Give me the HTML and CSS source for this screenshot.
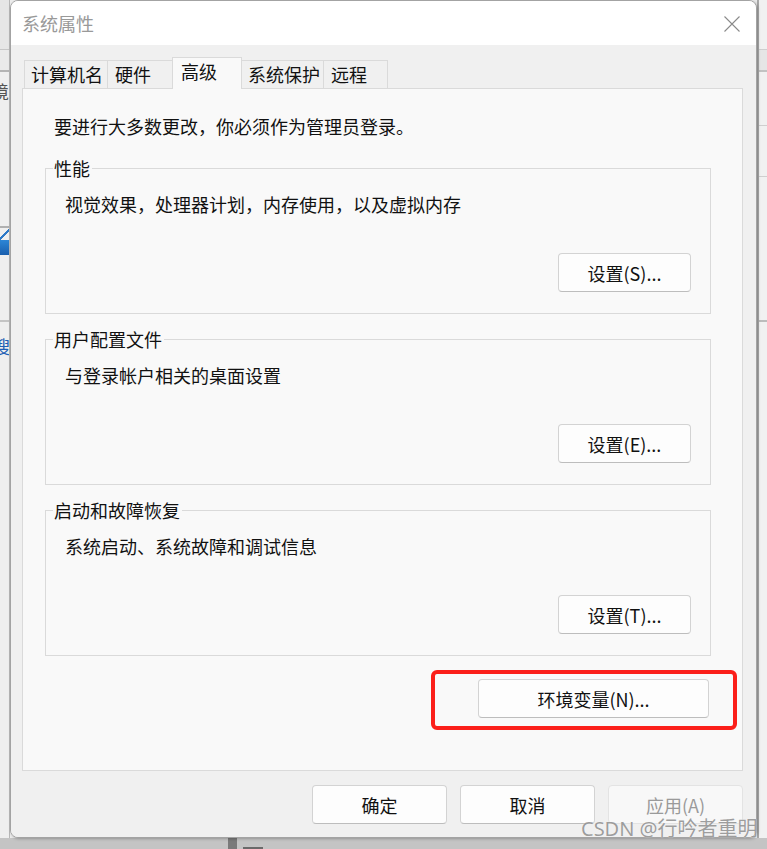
FILE: index.html
```html
<!DOCTYPE html>
<html lang="zh-CN">
<head>
<meta charset="utf-8">
<title>系统属性</title>
<link rel="stylesheet" href="styles.css">
</head>
<body>
<div class="screen">
  <div class="bg-left">
    <div class="bl-top"></div>
    <div class="bl-band"></div>
    <div class="bl-text">境</div>
    <div class="bl-icon"><div class="bl-icon-line"></div><div class="bl-icon-box"></div></div>
    <div class="bl-sep"></div>
    <div class="bl-link">搜</div>
  </div>

  <div class="dialog">
    <div class="titlebar">
      <span class="title">系统属性</span>
      <svg class="close" width="16" height="16" viewBox="0 0 16 16" aria-hidden="true">
        <path d="M0.5 0.5 L15.5 15.5 M15.5 0.5 L0.5 15.5" stroke="#8a8a8a" stroke-width="1.1" fill="none"/>
      </svg>
    </div>
    <div class="body">
      <div class="tabs">
        <div class="tab t1">计算机名</div>
        <div class="tab t2">硬件</div>
        <div class="tab t3 active">高级</div>
        <div class="tab t4">系统保护</div>
        <div class="tab t5">远程</div>
      </div>
      <div class="panel">
        <p class="intro">要进行大多数更改，你必须作为管理员登录。</p>

        <div class="group">
          <span class="legend">性能</span>
          <p class="desc">视觉效果，处理器计划，内存使用，以及虚拟内存</p>
          <div class="row"><button class="btn set">设置(S)...</button></div>
        </div>

        <div class="group">
          <span class="legend">用户配置文件</span>
          <p class="desc">与登录帐户相关的桌面设置</p>
          <div class="row"><button class="btn set">设置(E)...</button></div>
        </div>

        <div class="group">
          <span class="legend">启动和故障恢复</span>
          <p class="desc">系统启动、系统故障和调试信息</p>
          <div class="row"><button class="btn set">设置(T)...</button></div>
        </div>

        <div class="env-row"><button class="btn env">环境变量(N)...</button></div>
        <div class="highlight"></div>
      </div>
      <div class="footer">
        <button class="btn foot">确定</button>
        <button class="btn foot">取消</button>
        <button class="btn foot disabled">应用(A)</button>
      </div>
    </div>
  </div>

  <div class="bg-right">
    <div class="br-a"></div>
    <div class="br-b"></div>
    <div class="br-c"></div>
    <div class="br-d"></div>
    <div class="br-e"></div>
  </div>

  <div class="bg-bottom">
    <div class="bb-bar"></div>
    <div class="bb-tab"></div>
  </div>

  <div class="watermark">CSDN @行吟者重明</div>
</div>
</body>
</html>
```

FILE: styles.css
```css
* { box-sizing: border-box; }

html, body {
  margin: 0;
  padding: 0;
}

body {
  width: 767px;
  height: 849px;
  overflow: hidden;
  background: #ececec;
  font-family: "Noto Sans CJK SC", "Noto Sans", sans-serif;
  color: #111;
}

.screen {
  position: relative;
  display: grid;
  grid-template-columns: 10px 747px 10px;
  grid-template-rows: 838px 11px;
  width: 767px;
  height: 849px;
}

/* ---------- background fragments ---------- */
.bg-left {
  overflow: hidden;
  background: #efefef;
  border-right: 1px solid #b8b8b8;
}
.bl-top {
  height: 50px;
  background: #e6e6e6;
  border-bottom: 1px solid #c6c6c6;
}
.bl-band {
  height: 22px;
  background: #eaeaea;
  border-bottom: 2px solid #b4b4b4;
}
.bl-text {
  margin-top: 9px;
  margin-left: -9px;
  font-size: 18px;
  line-height: 20px;
  color: #555;
}
.bl-icon {
  margin-top: 125px;
  height: 30px;
}
.bl-icon-line {
  height: 14px;
  background: linear-gradient(135deg, transparent 0 45%, #2b78c8 45% 60%, transparent 60%);
  border-top: 2px solid #b0b0b0;
}
.bl-icon-box {
  height: 15px;
  background: linear-gradient(#2d86d6, #1a5fae);
}
.bl-sep {
  margin-top: 64px;
  height: 2px;
  background: #c4c4c4;
}
.bl-link {
  margin-top: 14px;
  margin-left: -8px;
  font-size: 18px;
  line-height: 20px;
  color: #1e5fb4;
}

.bg-right {
  background: #f1f1f1;
  border-left: 2px solid #a9a9a9;
}
.br-a {
  height: 50px;
  border-bottom: 1px solid #cfcfcf;
}
.br-b {
  height: 22px;
  background: #e6e6e6;
  border-bottom: 2px solid #c2c2c2;
}
.br-c {
  height: 54px;
  border-bottom: 1px solid #cfcfcf;
}
.br-d {
  height: 51px;
  border-bottom: 1px solid #cfcfcf;
}
.br-e {
  height: 145px;
  border-bottom: 2px solid #bcbcbc;
}

.bg-bottom {
  grid-column: 1 / 4;
  background: #c4c4c4;
  display: flex;
  align-items: flex-end;
}
.bb-bar {
  margin-left: 228px;
  width: 9px;
  height: 11px;
  background: #7a7a7a;
}
.bb-tab {
  margin-left: 6px;
  width: 20px;
  height: 2px;
  background: #6a6a6a;
}

/* ---------- dialog ---------- */
.dialog {
  display: flex;
  flex-direction: column;
  border: 1px solid #a3a3a3;
  border-radius: 8px;
  overflow: hidden;
  background: #f0f0f0;
  box-shadow: 1px 1px 3px rgba(0, 0, 0, 0.25);
  position: relative;
  z-index: 1;
}

.titlebar {
  height: 44px;
  flex: none;
  background: #ffffff;
  display: flex;
  align-items: center;
  justify-content: space-between;
  padding: 0 16px 0 11px;
}
.title {
  font-size: 18px;
  line-height: 20px;
  color: #999999;
}
.close {
  display: block;
  margin-top: 1px;
}

.body {
  flex: 1;
  background: #f0f0f0;
  padding: 12px 13px 0 11px;
}

/* ---------- tabs ---------- */
.tabs {
  display: flex;
  align-items: flex-end;
  height: 31px;
  margin-left: 2px;
  position: relative;
  z-index: 2;
}
.tab {
  height: 28px;
  border: 1px solid #dadada;
  border-bottom: none;
  background: #f0f0f0;
  font-size: 18px;
  line-height: 26px;
  padding-left: 6px;
  color: #111;
  white-space: nowrap;
}
.tab + .tab { margin-left: -1px; }
.t1 { width: 84px; }
.t2 { width: 66px; padding-left: 7px; }
.t3 { width: 70px; padding-left: 8px; }
.t4 { width: 83px; }
.t5 { width: 65px; padding-left: 7px; }
.tab.active {
  height: 32px;
  margin-bottom: -1px;
  background: #f9f9f9;
  position: relative;
  z-index: 3;
}

/* ---------- panel ---------- */
.panel {
  position: relative;
  width: 721px;
  height: 683px;
  background: #f9f9f9;
  border: 1px solid #dadada;
  padding: 27px 31px 0 22px;
}
.intro {
  margin: 0 0 0 9px;
  font-size: 18px;
  line-height: 20px;
}

.group {
  position: relative;
  height: 146px;
  margin-top: 25px;
  border: 1px solid #dadada;
  padding: 25px 19px 0 19px;
}
.intro + .group { margin-top: 32px; }

.legend {
  position: absolute;
  top: -11px;
  left: 7px;
  padding: 0 2px 0 1px;
  background: #f9f9f9;
  font-size: 18px;
  line-height: 20px;
}
.desc {
  margin: 0;
  font-size: 18px;
  line-height: 20px;
}
.row {
  display: flex;
  justify-content: flex-end;
  margin-top: 39px;
}

.btn {
  font-family: "Noto Sans CJK SC", "Noto Sans", sans-serif;
  font-size: 18px;
  line-height: 20px;
  color: #111;
  height: 39px;
  background: #fdfdfd;
  border: 1px solid #d3d3d3;
  border-bottom-color: #bdbdbd;
  border-radius: 4px;
  padding: 0;
}
.set { width: 133px; }

.env-row {
  display: flex;
  justify-content: flex-end;
  margin-top: 23px;
  padding-right: 2px;
}
.env { width: 231px; }

.highlight {
  position: absolute;
  left: 408px;
  top: 581px;
  width: 306px;
  height: 60px;
  border: 4px solid #fb1f1a;
  border-radius: 6px;
}

/* ---------- footer ---------- */
.footer {
  display: flex;
  justify-content: flex-end;
  gap: 13px;
  margin-top: 14px;
  padding-right: 0;
}
.foot { width: 135px; }
.foot.disabled {
  color: #9a9a9a;
  background: #f8f8f8;
  border-color: #e3e3e3;
}

/* ---------- watermark ---------- */
.watermark {
  position: absolute;
  left: 581px;
  top: 816px;
  z-index: 5;
  font-family: "Noto Sans", "Noto Sans CJK SC", sans-serif;
  font-size: 20px;
  line-height: 26px;
  color: rgba(140, 140, 140, 0.85);
  text-shadow: 0 0 1px rgba(255, 255, 255, 0.8);
  white-space: nowrap;
}
```
